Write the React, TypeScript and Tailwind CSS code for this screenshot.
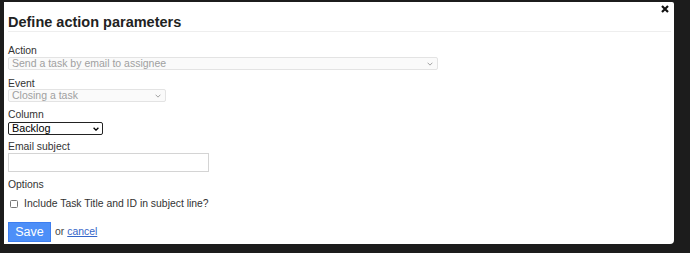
import React from 'react';

const Chevron: React.FC<{ className?: string; strokeWidth?: number }> = ({ className, strokeWidth = 1.2 }) => (
  <svg className={className} viewBox="0 0 8 5" fill="none" stroke="currentColor" strokeWidth={strokeWidth}>
    <path d="M0.8 0.8 L4 4 L7.2 0.8" />
  </svg>
);

const Label: React.FC<{ children: React.ReactNode; className?: string }> = ({ children, className = '' }) => (
  <div className={`text-[10.4px] leading-[12px] text-[#333] ${className}`}>{children}</div>
);

const DisabledSelect: React.FC<{ value: string; width: string; className?: string }> = ({ value, width, className = '' }) => (
  <div className={`relative flex items-center h-[13px] ${width} border border-[#e3e3e3] bg-[#fafafa] rounded-[2px] ${className}`}>
    <span className="pl-[3px] text-[10.5px] leading-[11px] text-[#a0a0a0]">{value}</span>
    <Chevron className="absolute right-[4px] top-[4px] w-[6px] h-[4px] text-[#999]" />
  </div>
);

const App: React.FC = () => {
  return (
    <div className="w-[690px] h-[253px] bg-[#1c1c1c] pl-[4px] pt-[2px] font-['Liberation_Sans',Arial,sans-serif]">
      <div className="relative w-[670px] h-[242px] bg-white rounded-br-[4px] rounded-tr-[2px] px-[4px]">
        <svg className="absolute right-[5px] top-[3px] w-[8px] h-[8px] text-[#111]" viewBox="0 0 8 8" stroke="currentColor" strokeWidth="2.2">
          <path d="M1 1 L7 7 M7 1 L1 7" />
        </svg>

        <h2 className="pt-[11.5px] text-[14.5px] leading-[17px] font-bold text-[#222]">Define action parameters</h2>
        <div className="h-[1.5px] bg-[#eeeeee] w-[663px]" />

        <Label className="mt-[12.5px]">Action</Label>
        <DisabledSelect value="Send a task by email to assignee" width="w-[430px]" />

        <Label className="mt-[8px]">Event</Label>
        <DisabledSelect value="Closing a task" width="w-[158px]" className="-mt-[1px]" />

        <Label className="mt-[7px]">Column</Label>
        <div className="relative flex items-center mt-[1px] h-[13px] w-[95px] border border-[#222] rounded-[2px] bg-white">
          <span className="pl-[3px] text-[10.8px] leading-[11px] text-black">Backlog</span>
          <Chevron className="absolute right-[3px] top-[4px] w-[6px] h-[4px] text-black" strokeWidth={1.8} />
        </div>

        <Label className="mt-[6.5px]">Email subject</Label>
        <div className="h-[19px] w-[201px] border border-[#d4d4d4] bg-white" />

        <Label className="mt-[6.5px]">Options</Label>
        <div className="flex items-center mt-[7px]">
          <span className="ml-[2px] w-[8px] h-[8px] border border-[#777] rounded-[1.5px] bg-white" />
          <span className="ml-[6px] text-[10.4px] leading-[12px] text-[#333]">Include Task Title and ID in subject line?</span>
        </div>

        <div className="flex items-center mt-[12px]">
          <button className="h-[20px] w-[43px] bg-[#4d8ff8] border border-[#3d7ef0] text-white text-[12.5px] leading-[18px] font-medium">Save</button>
          <span className="ml-[4px] text-[10.4px] text-[#444]">or</span>
          <a href="#" className="ml-[3px] text-[10.4px] text-[#3565c8] underline">cancel</a>
        </div>
      </div>
    </div>
  );
};

export default App;
